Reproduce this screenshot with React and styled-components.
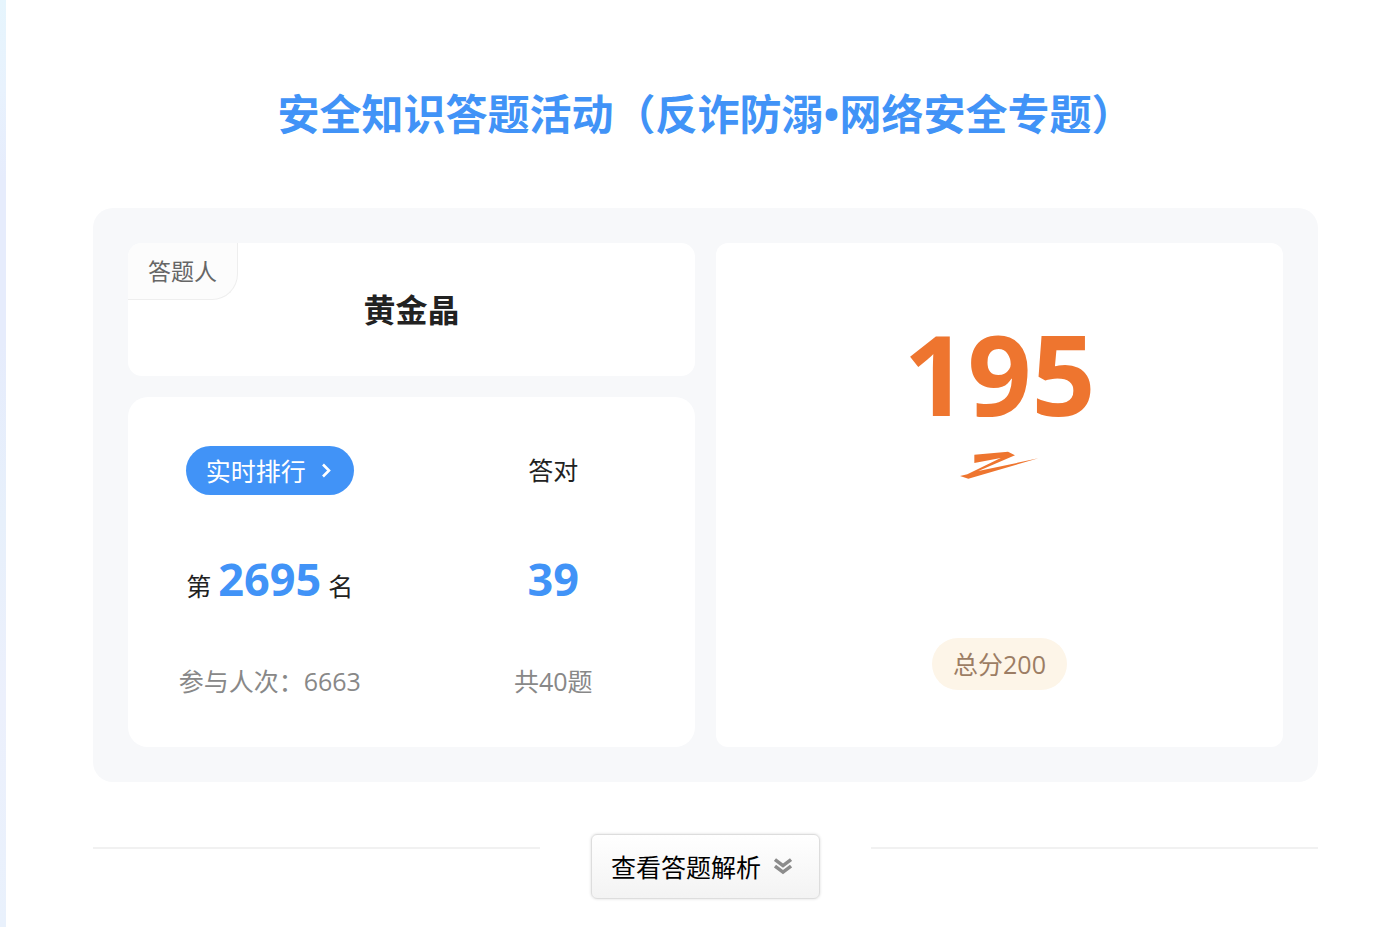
import React from "react";
import styled, { createGlobalStyle } from "styled-components";

const GlobalStyle = createGlobalStyle`
  * { box-sizing: border-box; }
  body {
    margin: 0;
    background: #fff;
    color: #222;
    font-family: "Open Sans", "Noto Sans CJK SC", sans-serif;
    font-size: 25px;
    line-height: 40px;
  }
  button { font: inherit; cursor: pointer; }
  h1, h2, p { margin: 0; }
`;

const Page = styled.div`
  display: flex;
  min-height: 100vh;
`;

const Edge = styled.div`
  flex: 0 0 6px;
  background: linear-gradient(#e6f5fd 0, #e8f2fd 90px, #e6ecfc 180px, #e6ecfc 340px, #e7f0fb 520px, #ecf0fc 700px, #e9f1fc 100%);
`;

const Main = styled.main`
  flex: 1;
  min-width: 0;
  padding: 82px 82px 28px 87px;
`;

const Title = styled.h1`
  color: #4193f7;
  font-size: 42px;
  line-height: 64px;
  font-weight: 700;
  text-align: center;
  white-space: nowrap;
`;

const Panel = styled.section`
  display: grid;
  grid-template-columns: 1fr 1fr;
  gap: 21px;
  margin-top: 62px;
  padding: 35px;
  border-radius: 20px;
  background: #f7f8fa;
`;

const Column = styled.div`
  display: flex;
  flex-direction: column;
  gap: 21px;
`;

const Card = styled.div`
  position: relative;
  overflow: hidden;
  border-radius: ${(p) => p.$radius}px;
  background: #fff;
`;

const NameCard = styled(Card)`
  padding: 43px 20px 42px;
  text-align: center;
`;

const Tag = styled.span`
  position: absolute;
  top: 0;
  left: 0;
  padding: 8px 20px;
  border: solid #eee;
  border-width: 0 1px 1px 0;
  border-bottom-right-radius: 26px;
  background: #fcfcfc;
  color: #666;
  font-size: 23px;
`;

const Name = styled.h2`
  font-size: 32px;
  line-height: 48px;
  font-weight: 700;
`;

const StatsCard = styled(Card)`
  display: grid;
  grid-template-columns: 1fr 1fr;
  padding: 49px 0 46px;
`;

const Stat = styled.div`
  display: flex;
  flex-direction: column;
  align-items: center;
`;

const StatLabel = styled.p`
  line-height: 49px;
`;

const RankButton = styled.button`
  display: flex;
  align-items: center;
  gap: 14px;
  height: 49px;
  padding: 0 20px;
  border: 0;
  border-radius: 25px;
  background: #4193f7;
  color: #fff;
`;

const StatValue = styled.p`
  display: flex;
  align-items: baseline;
  gap: 7px;
  height: 64px;
  margin: 52px 0 50px;
  line-height: 64px;
`;

const Figure = styled.strong`
  color: #4193f7;
  font-size: 45px;
`;

const StatNote = styled.p`
  color: #888;
`;

const ScoreCard = styled(Card)`
  display: flex;
  flex-direction: column;
  align-items: center;
  gap: 6px;
  padding: 58px 20px 57px;
`;

const Score = styled.strong`
  color: #ee752f;
  font-size: 112px;
  line-height: 144px;
`;

const TotalBadge = styled.span`
  margin-top: auto;
  padding: 6px 21px;
  border-radius: 26px;
  background: #fdf5e8;
  color: #9c7d64;
`;

const Divider = styled.div`
  display: flex;
  align-items: flex-start;
  gap: 51px;
  margin-top: 52px;
`;

const Rule = styled.span`
  flex: 1;
  height: 2px;
  margin-top: 13px;
  background: #f1f1f1;
`;

const ReviewButton = styled.button`
  display: flex;
  align-items: center;
  gap: 13px;
  height: 65px;
  padding: 0 27px 0 19px;
  border: 1px solid #ddd;
  border-radius: 6px;
  background: linear-gradient(#fff, #f3f3f3);
  box-shadow: 0 0 3px rgba(0, 0, 0, 0.15);
  color: #000;
`;

const Chevron = () => (
  <svg width="14" height="16" viewBox="0 0 14 16" fill="none" stroke="#fff" strokeWidth="2.6" aria-hidden="true">
    <path d="M3 1.5 9 7.5 3 13.5" />
  </svg>
);

const DoubleChevron = () => (
  <svg width="18" height="18" viewBox="0 0 18 18" fill="none" stroke="#8c8c8c" strokeWidth="3.4" aria-hidden="true">
    <path d="M1 1.5 9 7.5 17 1.5M1 8 9 14 17 8" />
  </svg>
);

const Swish = () => (
  <svg width="80" height="29" viewBox="0 0 240 87" fill="#ee752f" aria-hidden="true">
    <path d="M43 11 144 2 165 13 55 60 235 22 25 83 0 75 22 70 122 21 43 36Z" />
  </svg>
);

export default function App() {
  return (
    <Page>
      <GlobalStyle />
      <Edge />
      <Main>
        <Title>安全知识答题活动（反诈防溺•网络安全专题）</Title>
        <Panel>
          <Column>
            <NameCard $radius={14}>
              <Tag>答题人</Tag>
              <Name>黄金晶</Name>
            </NameCard>
            <StatsCard $radius={20}>
              <Stat>
                <RankButton type="button">
                  实时排行
                  <Chevron />
                </RankButton>
                <StatValue>
                  第<Figure>2695</Figure>名
                </StatValue>
                <StatNote>参与人次：6663</StatNote>
              </Stat>
              <Stat>
                <StatLabel>答对</StatLabel>
                <StatValue>
                  <Figure>39</Figure>
                </StatValue>
                <StatNote>共40题</StatNote>
              </Stat>
            </StatsCard>
          </Column>
          <ScoreCard $radius={12}>
            <Score>195</Score>
            <Swish />
            <TotalBadge>总分200</TotalBadge>
          </ScoreCard>
        </Panel>
        <Divider>
          <Rule />
          <ReviewButton type="button">
            查看答题解析
            <DoubleChevron />
          </ReviewButton>
          <Rule />
        </Divider>
      </Main>
    </Page>
  );
}
